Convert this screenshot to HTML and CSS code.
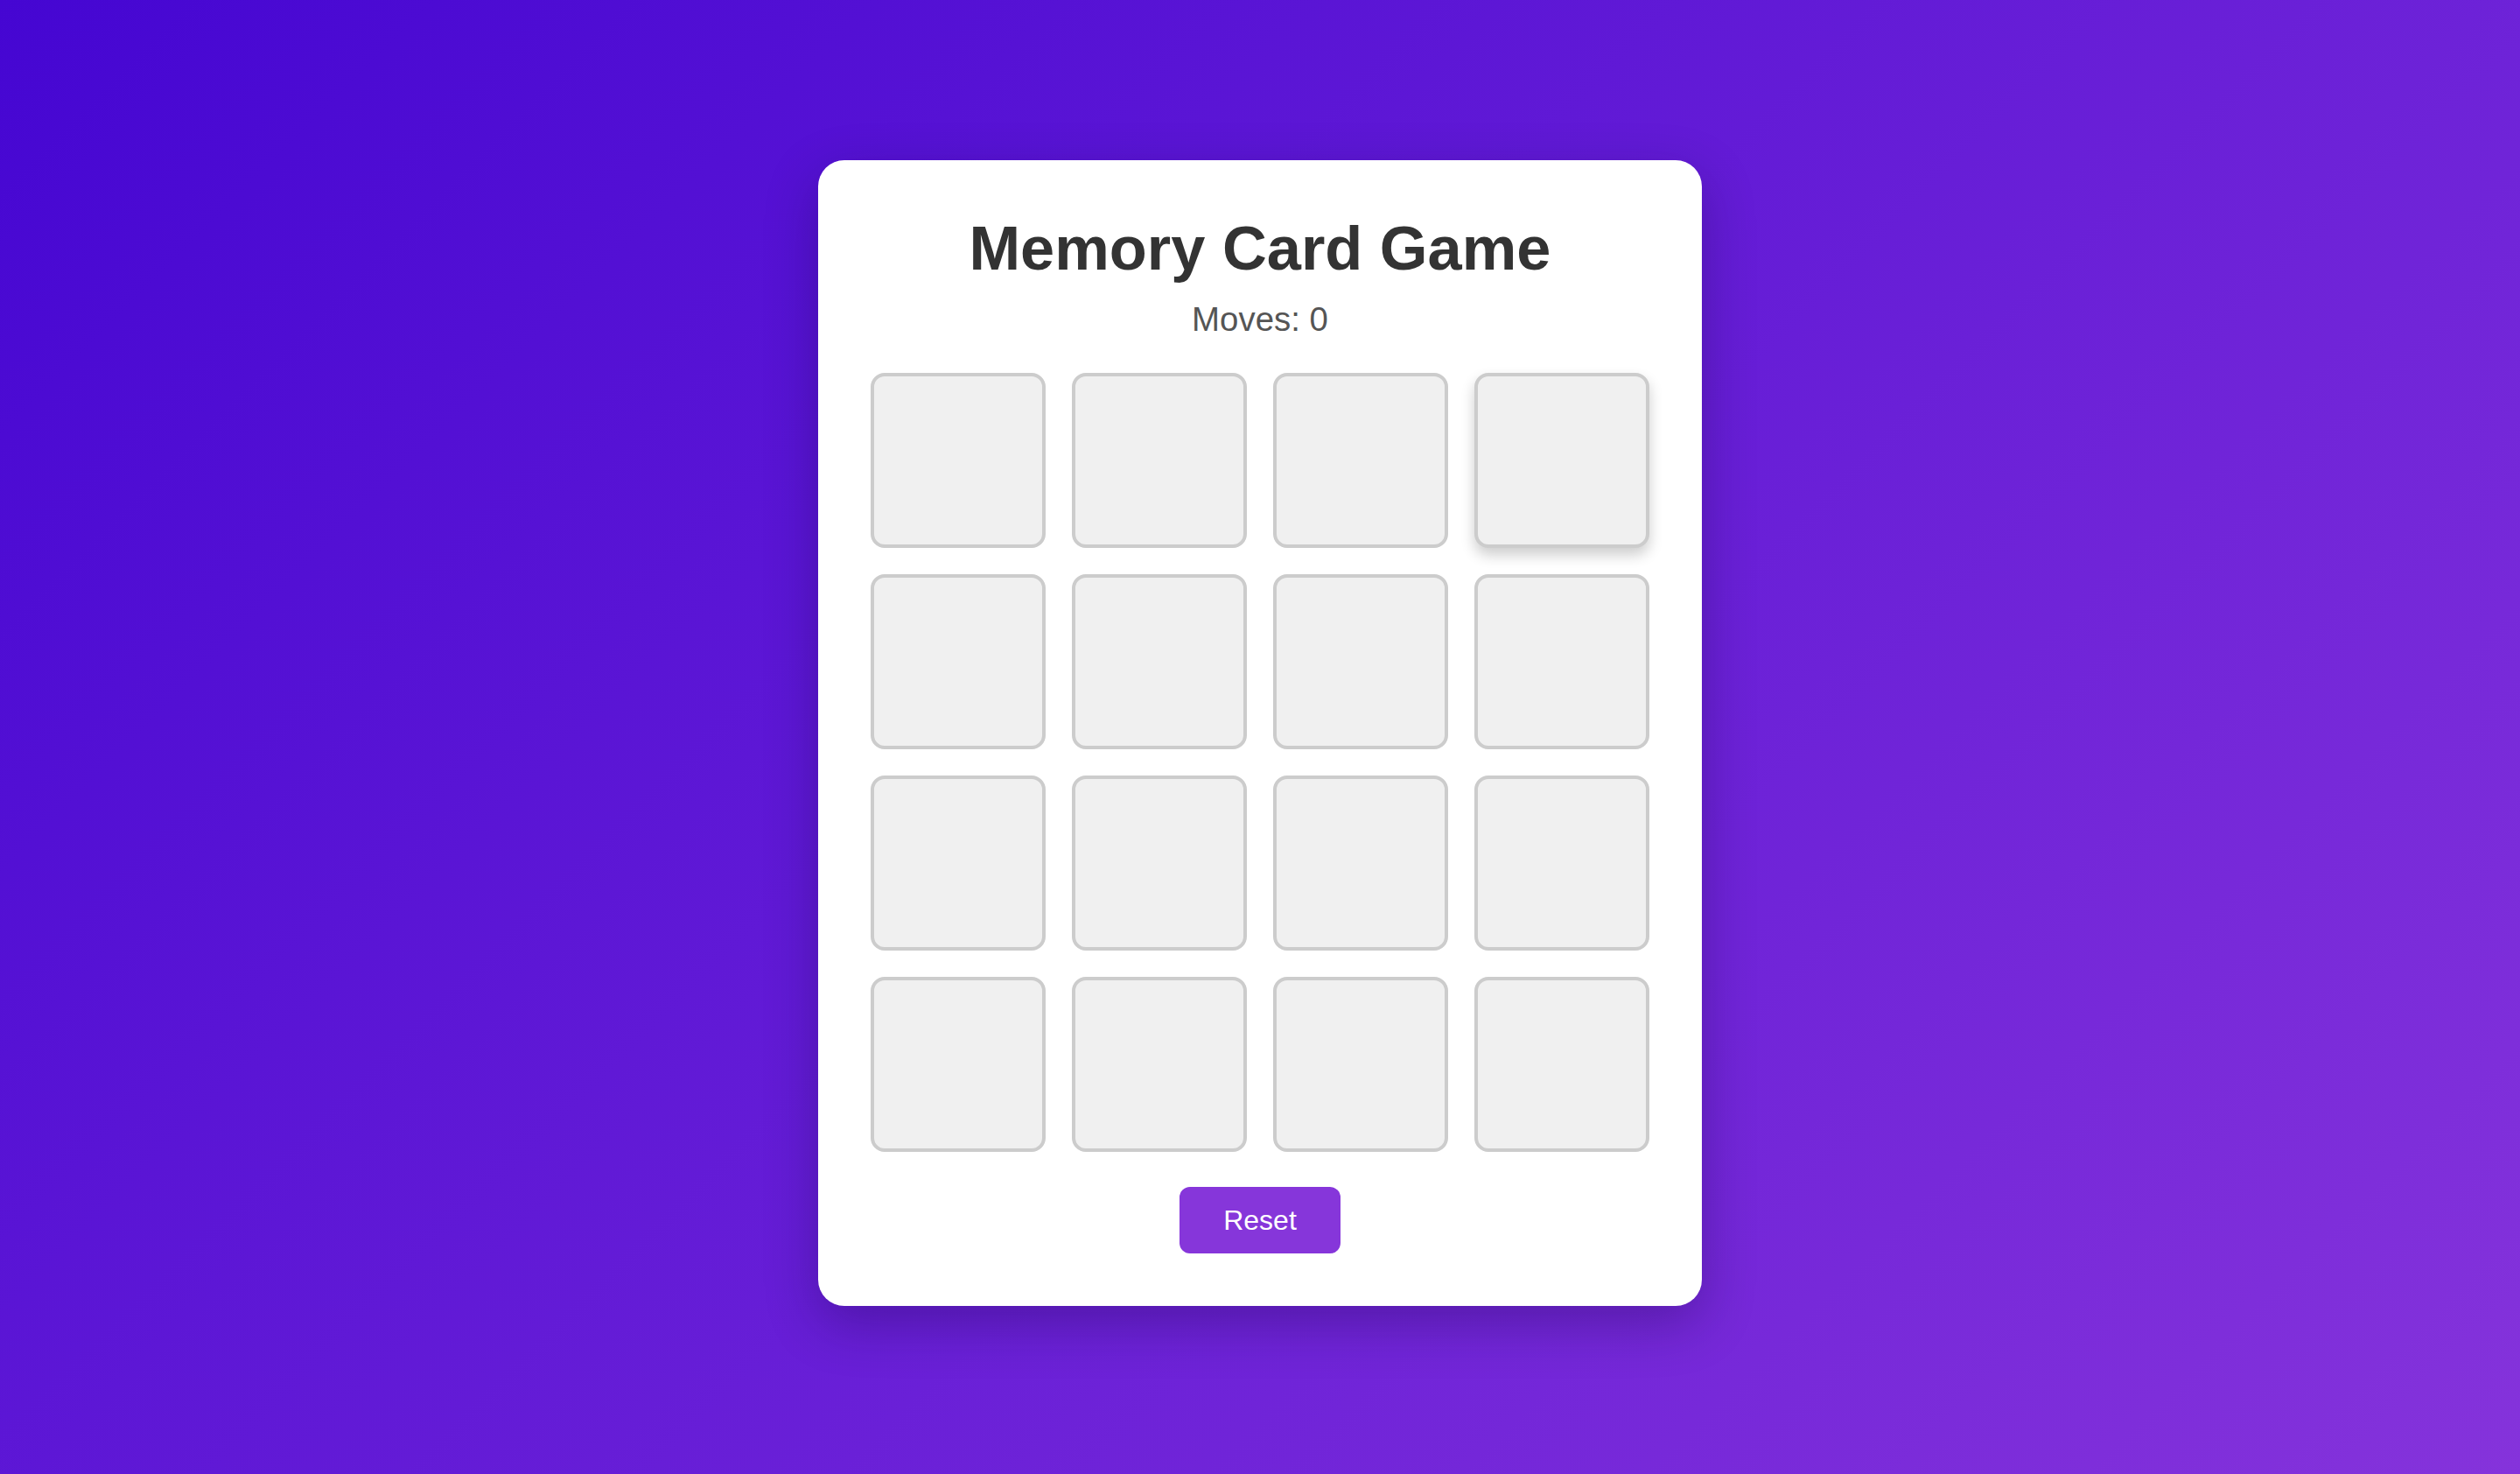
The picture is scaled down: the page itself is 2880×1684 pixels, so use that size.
FILE: index.html
```html
<!DOCTYPE html>
<html lang="en">
<head>
<meta charset="utf-8">
<title>Memory Card Game</title>
<link rel="stylesheet" href="styles.css">
</head>
<body>
<main class="game">
  <h1 class="title">Memory Card Game</h1>
  <p class="moves">Moves: 0</p>
  <div class="board">
    <div class="tile"></div><div class="tile"></div><div class="tile"></div><div class="tile tile-hover"></div>
    <div class="tile"></div><div class="tile"></div><div class="tile"></div><div class="tile"></div>
    <div class="tile"></div><div class="tile"></div><div class="tile"></div><div class="tile"></div>
    <div class="tile"></div><div class="tile"></div><div class="tile"></div><div class="tile"></div>
  </div>
  <button class="reset">Reset</button>
</main>
</body>
</html>
```
FILE: styles.css
```css
html, body {
  margin: 0;
  padding: 0;
}
body {
  min-height: 100vh;
  box-sizing: border-box;
  padding-bottom: 10px;
  display: flex;
  justify-content: center;
  align-items: center;
  background: linear-gradient(135deg, #4506d2 0%, #8533db 100%);
  font-family: "Liberation Sans", Arial, Helvetica, sans-serif;
}
.game {
  background: #ffffff;
  border-radius: 30px;
  padding: 60px;
  box-shadow: 0 20px 60px rgba(20, 0, 60, 0.3);
  display: flex;
  flex-direction: column;
  align-items: center;
}
.title {
  margin: 0 0 19px;
  font-size: 70.4px;
  font-weight: bold;
  color: #333333;
}
.moves {
  margin: 0 0 39px;
  font-size: 38.4px;
  color: #555555;
}
.board {
  display: grid;
  grid-template-columns: repeat(4, 200px);
  grid-auto-rows: 200px;
  gap: 30px;
}
.tile {
  box-sizing: border-box;
  background: #f0f0f0;
  border: 4px solid #cccccc;
  border-radius: 16px;
}
.tile-hover {
  box-shadow: 0 8px 16px rgba(0, 0, 0, 0.2);
}
.reset {
  margin-top: 40px;
  padding: 20px 50px;
  border: none;
  border-radius: 12px;
  background: #8636da;
  color: #ffffff;
  font-family: "Liberation Sans", Arial, Helvetica, sans-serif;
  font-size: 32px;
  line-height: 36px;
}
```
